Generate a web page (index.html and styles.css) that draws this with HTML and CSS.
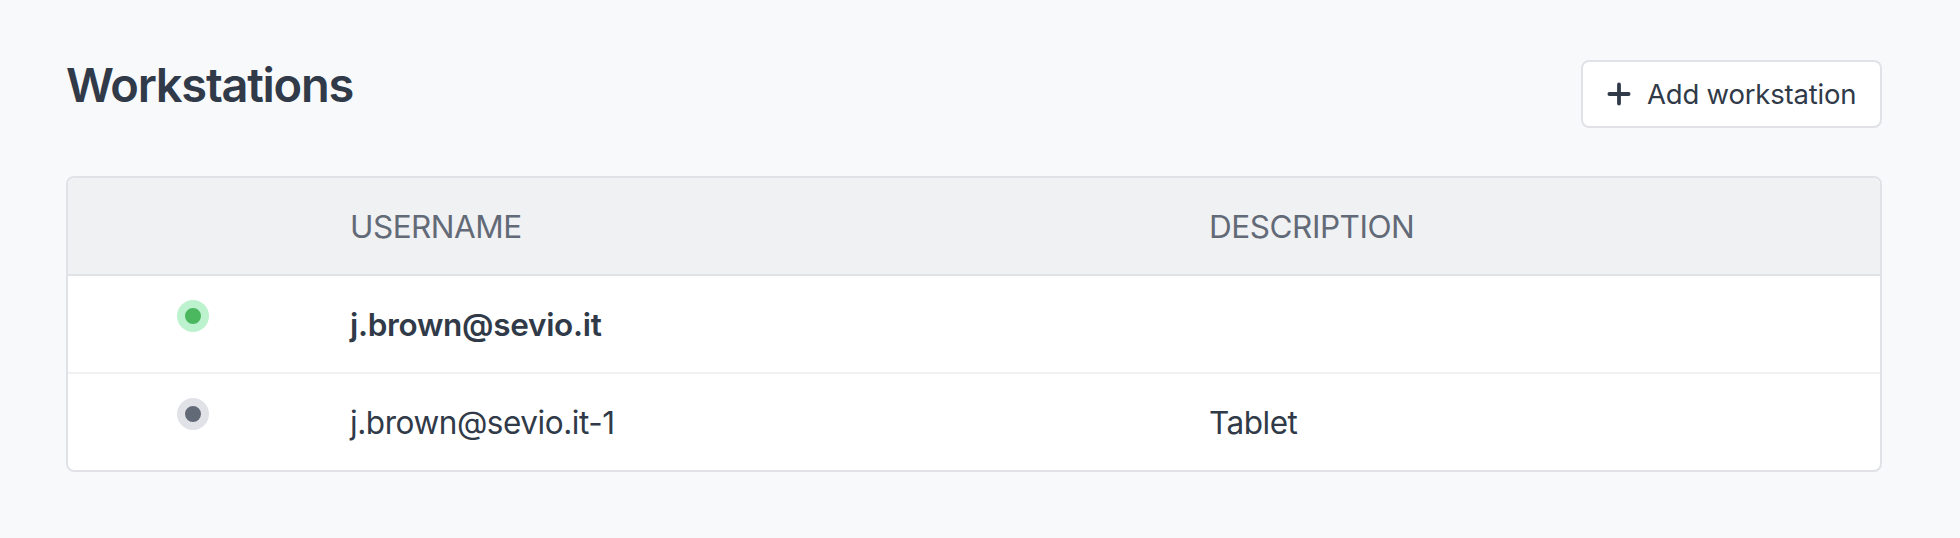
FILE: index.html
```html
<!DOCTYPE html>
<html lang="en">
<head>
<meta charset="utf-8">
<title>Workstations</title>
<link rel="stylesheet" href="styles.css">
</head>
<body>
<main class="page">
  <header class="page-header">
    <h1 class="page-title">Workstations</h1>
    <button class="add-button" type="button">
      <svg class="add-icon" viewBox="0 0 24 24" aria-hidden="true"><path d="M12 2.4v19.2M2.4 12h19.2"/></svg>
      <span class="add-label">Add workstation</span>
    </button>
  </header>
  <section class="table">
    <div class="row row-head">
      <div></div>
      <div class="cell head-user">USERNAME</div>
      <div class="cell head-desc">DESCRIPTION</div>
    </div>
    <div class="row">
      <div class="status"><span class="dot dot-online"></span></div>
      <div class="cell user-current">j.brown@sevio.it</div>
      <div></div>
    </div>
    <div class="row">
      <div class="status"><span class="dot dot-offline"></span></div>
      <div class="cell user">j.brown@sevio.it-1</div>
      <div class="cell desc">Tablet</div>
    </div>
  </section>
</main>
</body>
</html>
```
FILE: styles.css
```css
* { box-sizing: border-box; }
body {
  margin: 0;
  background: #f8f9fb;
  color: #303a48;
  font-family: Inter, "Liberation Sans", sans-serif;
}
.page { padding: 60px 78px 0 66px; }
.page-header {
  display: flex;
  justify-content: space-between;
  align-items: flex-start;
  height: 116px;
}
.page-title {
  margin: 0;
  font-size: 47px;
  line-height: 50px;
  font-weight: 600;
  letter-spacing: -1.25px;
}
.add-button {
  display: flex;
  align-items: center;
  gap: 16px;
  width: 301px;
  height: 68px;
  padding: 0 0 0 24px;
  border: 2px solid #e1e2e8;
  border-radius: 8px;
  background: #fff;
  color: inherit;
  font: inherit;
  font-size: 27.5px;
  line-height: 40px;
  letter-spacing: -0.2px;
  white-space: nowrap;
}
.add-icon {
  width: 24px;
  height: 24px;
  fill: none;
  stroke: #303a48;
  stroke-width: 3.8;
  stroke-linecap: round;
}
.table {
  border: 2px solid #e1e2e8;
  border-radius: 8px;
  background: #fff;
  overflow: hidden;
  font-size: 31.5px;
  line-height: 48px;
}
.row {
  display: grid;
  grid-template-columns: 282px 859px 1fr;
  align-items: center;
  height: 98px;
  border-bottom: 2px solid #f1f1f3;
}
.row:last-child { height: 96px; border-bottom: 0; }
.row-head {
  background: #f0f1f3;
  border-bottom-color: #e1e2e8;
  color: #636a77;
}
.cell { padding-top: 2px; }
.status { align-self: start; padding: 24px 0 0 109px; }
.dot {
  display: block;
  width: 32px;
  height: 32px;
  border: 8px solid;
  border-radius: 50%;
}
.dot-online { background: #4bb85f; border-color: #bcf2cd; }
.dot-offline { background: #636a77; border-color: #e1e2e8; }
.head-user { letter-spacing: -0.5px; }
.head-desc { letter-spacing: -0.45px; }
.user-current { font-weight: 600; letter-spacing: -0.3px; }
.user { letter-spacing: -0.45px; }
.desc { letter-spacing: -0.5px; }
```
